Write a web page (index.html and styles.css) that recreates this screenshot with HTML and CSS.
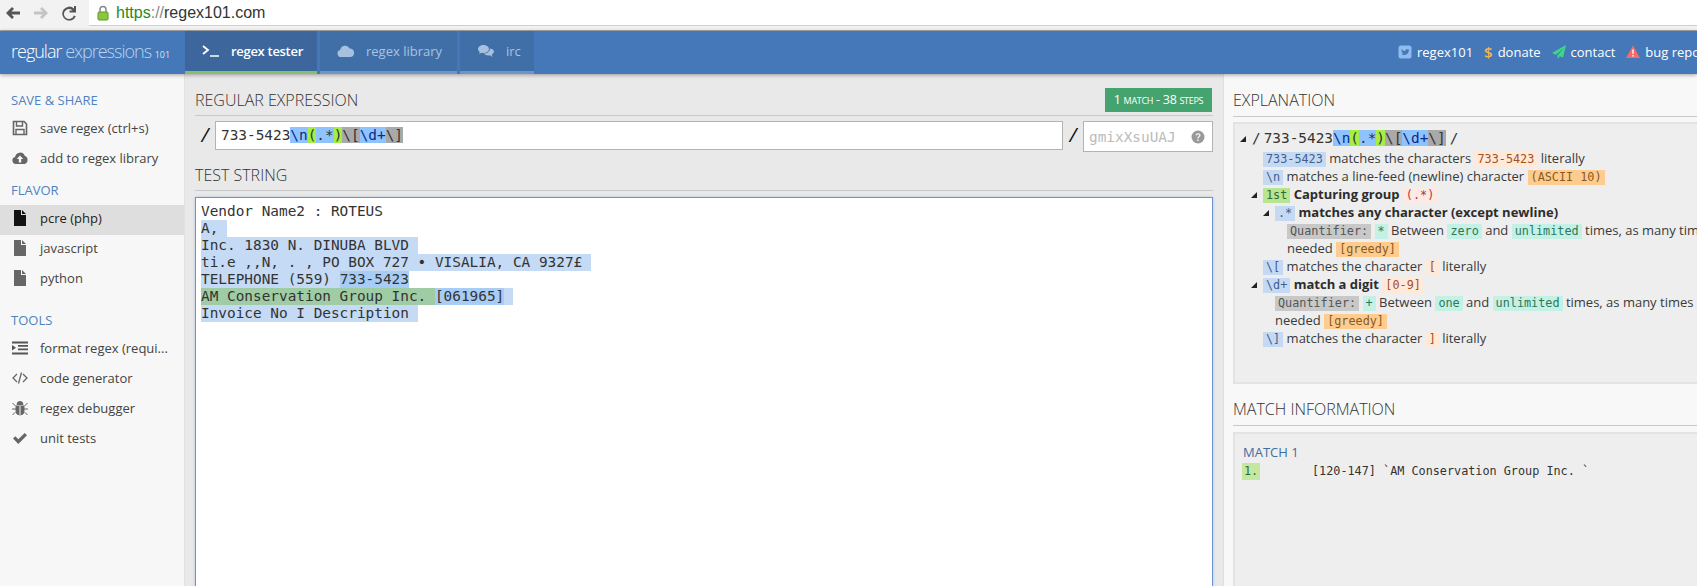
FILE: index.html
```html
<!DOCTYPE html>
<html lang="en">
<head>
<meta charset="utf-8">
<title>regex101</title>
<link rel="stylesheet" href="styles.css">
</head>
<body>
<div class="chrome">
  <div class="nav">
    <svg class="nav-ic" viewBox="0 0 16 16"><path d="M1 8l6-6 2 2-2.600 2.600H15v3H6.400L9 12l-2 2z" fill="#555"/></svg>
    <svg class="nav-ic" viewBox="0 0 16 16"><path d="M15 8L9 2 7 4l2.600 2.600H1v2.800h8.600L7 12l2 2z" fill="#c4c4c4"/></svg>
    <svg class="nav-ic" viewBox="0 0 16 16"><path d="M13 3.400V1l2 0v6.500H8.500v-2h3A5 5 0 1 0 12.800 10.400l2 .8A7 7 0 1 1 13 3.400z" fill="#555"/></svg>
  </div>
  <div class="url">
    <svg class="lock" viewBox="0 0 12 16"><path d="M3 7V4.500a3 3 0 0 1 6 0V7" fill="none" stroke="#888" stroke-width="1.500"/><rect x="1" y="7" width="10" height="8" rx="1" fill="#8cc63f" stroke="#5a9a2a"/></svg>
    <span class="url-text"><span class="https">https</span><span class="sep">://</span>regex101.com</span>
  </div>
</div>
<header class="top">
  <div class="logo">regular <span class="logo-light">expressions</span> <span class="logo-num">101</span></div>
  <nav class="tabs">
    <a class="tab active"><svg class="tab-ic" viewBox="0 0 18 14"><path d="M1 2l5 4-5 4" fill="none" stroke="#fff" stroke-width="1.800"/><path d="M8 12h9" stroke="#fff" stroke-width="1.500"/></svg>regex tester</a>
    <a class="tab lib"><svg class="tab-ic cloud" viewBox="0 0 18 14"><path d="M4 13a3.500 3.500 0 0 1-.8-6.900A5 5 0 0 1 12.600 4.400 4.400 4.400 0 0 1 14 13z" fill="#a6c0e0"/></svg>regex library</a>
    <a class="tab irc"><svg class="tab-ic comment" viewBox="0 0 18 14"><path d="M6.500 1C3.500 1 1 2.800 1 5c0 1.200.7 2.200 1.800 3L2 10l2.500-1.200c.6.200 1.300.2 2 .2 3 0 5.500-1.800 5.500-4S9.500 1 6.500 1z" fill="#a6c0e0"/><path d="M13 4.500c0 2.800-2.800 5-6 5.300C8 11 9.500 11.500 11.500 11.500c.5 0 1 0 1.500-.2L15.500 13l-.6-2.500C16.200 9.700 17 8.600 17 7.500 17 6 15.300 4.800 13 4.500z" fill="#a6c0e0"/></svg>irc</a>
  </nav>
  <div class="links">
    <a class="link"><svg class="link-ic" viewBox="0 0 14 14"><rect x="0.500" y="0.500" width="13" height="13" rx="2.500" fill="#8fbcef"/><path d="M3 4c1.500 1.400 2.800 2 4.200 2.100C7 4.500 9 3.500 10.100 4.600l1-.4-.5 1 .8-.2-.7.8c0 3-3.500 5.400-7.400 3.600 1 0 1.800-.2 2.400-.8-1 0-1.700-.6-1.900-1.300h.9C3.800 7 3.200 6.300 3.200 5.500l.8.2C3.200 5.200 2.900 4.800 3 4z" fill="#4578b8"/></svg>regex101</a>
    <a class="link"><span class="dollar">$</span>donate</a>
    <a class="link"><svg class="link-ic" viewBox="0 0 14 14"><path d="M14 0L0 8l4 1.800L12 3 5.500 10.600V14l2.400-2.800 3.100 1.300z" fill="#3fd68a"/></svg>contact</a>
    <a class="link"><svg class="link-ic" viewBox="0 0 14 14"><path d="M7 0.500L14 13H0z" fill="#f56a6a"/><path d="M6.200 4.500h1.600l-.2 4.500H6.400zM6.300 10h1.400v1.500H6.300z" fill="#fff"/></svg>bug report</a>
  </div>
</header>
<div class="layout">
  <aside class="side">
    <h4 class="side-title">SAVE &amp; SHARE</h4>
    <a class="side-item"><svg class="side-ic" viewBox="0 0 16 16"><path d="M1.500 1.500h10.500l2.500 2.500v10.500h-13z" fill="none" stroke="#666" stroke-width="1.600"/><path d="M4.500 2v4h6V2M4 14V9.500h8V14" fill="none" stroke="#666" stroke-width="1.400"/></svg>save regex (ctrl+s)</a>
    <a class="side-item"><svg class="side-ic" viewBox="0 0 16 16"><path d="M4 14a3.500 3.500 0 0 1-.9-6.900 5 5 0 0 1 9.600-1.400A4.400 4.400 0 0 1 12.500 14z" fill="#666"/><path d="M8 5.500L4.800 9h2v3.500h2.400V9h2z" fill="#f7f7f7"/></svg>add to regex library</a>
    <h4 class="side-title gap-s">FLAVOR</h4>
    <a class="side-item current"><svg class="side-ic" viewBox="0 0 16 16"><path d="M2 0h7v5h5v11H2zM10 0l4 4h-4z" fill="#111"/></svg>pcre (php)</a>
    <a class="side-item"><svg class="side-ic" viewBox="0 0 16 16"><path d="M2 0h7v5h5v11H2zM10 0l4 4h-4z" fill="#666"/></svg>javascript</a>
    <a class="side-item"><svg class="side-ic" viewBox="0 0 16 16"><path d="M2 0h7v5h5v11H2zM10 0l4 4h-4z" fill="#666"/></svg>python</a>
    <h4 class="side-title gap-l">TOOLS</h4>
    <a class="side-item"><svg class="side-ic" viewBox="0 0 16 16"><path d="M0 1.500h16v2H0zM6 5h10v1.800H6zM6 8.500h10v1.800H6zM0 12.500h16v2H0zM0 5l4 2.800-4 2.800z" fill="#555"/></svg>format regex (requi...</a>
    <a class="side-item"><svg class="side-ic" viewBox="0 0 16 16"><path d="M5 4L1 8l4 4M11 4l4 4-4 4M9.500 2.500l-3 11" fill="none" stroke="#666" stroke-width="1.300"/></svg>code generator</a>
    <a class="side-item"><svg class="side-ic" viewBox="0 0 16 16"><path d="M5 4.500a3 3 0 0 1 6 0zM4 6h8v5a4 4 0 0 1-8 0zM0.500 3l3 3M15.500 3l-3 3M0 9h4M12 9h4M0.500 15l3-3M15.500 15l-3-3" fill="#666" stroke="#666"/><path d="M8 6v9" stroke="#f7f7f7" stroke-width="1"/></svg>regex debugger</a>
    <a class="side-item"><svg class="side-ic" viewBox="0 0 16 16"><path d="M1 8.500l2.300-2.300 3 3L12.700 3 15 5.300 6.300 14z" fill="#666"/></svg>unit tests</a>
  </aside>
  <main class="main">
    <div class="head">
      <h3 class="title">REGULAR EXPRESSION</h3>
      <div class="badge">1 <small>MATCH</small> - 38 <small>STEPS</small></div>
    </div>
    <div class="regex-row">
      <span class="slash first">/</span>
      <div class="regex-input mono"><span class="plain">733-5423</span><span class="hb nl">\n</span><span class="hg">(</span><span class="hb">.*</span><span class="hg">)</span><span class="hs">\[</span><span class="hb nl">\d+</span><span class="hs">\]</span></div>
      <span class="slash">/</span>
      <div class="flags mono"><span>gmixXsuUAJ</span><svg class="help" viewBox="0 0 14 14"><circle cx="7" cy="7" r="6.500" fill="#999"/><path d="M4.600 5.200C4.800 3.800 5.800 3.200 7.100 3.200c1.500 0 2.500.9 2.500 2 0 1.900-2 1.800-2 3.300H6.200c0-2.200 1.900-2.200 1.900-3.300 0-.5-.4-.8-1-.8s-1 .3-1.200 1.100zM6.200 9.400h1.500v1.500H6.200z" fill="#eee"/></svg></div>
    </div>
    <div class="head second"><h3 class="title">TEST STRING</h3></div>
    <div class="test mono">
      <div class="line">Vendor Name2 : ROTEUS</div>
      <div class="line"><span class="m">A,&nbsp;</span></div>
      <div class="line"><span class="m">Inc. 1830 N. DINUBA BLVD&nbsp;</span></div>
      <div class="line"><span class="m">ti.e ,,N, . , PO BOX 727 • VISALIA, CA 9327£&nbsp;</span></div>
      <div class="line"><span class="m">TELEPHONE (559) </span><span class="md">733-5423</span></div>
      <div class="line"><span class="mg">AM Conservation Group Inc. </span><span class="md">[061965]</span><span class="m">&nbsp;</span></div>
      <div class="line"><span class="m">Invoice No I Description&nbsp;</span></div>
    </div>
  </main>
  <aside class="right">
    <div class="head r"><h3 class="title">EXPLANATION</h3></div>
    <div class="box expl">
      <div class="row p0"><i class="tri"></i><span class="mono14"><span class="sl">/</span>733-5423<span class="hb nl">\n</span><span class="hg">(</span><span class="hb">.*</span><span class="hg">)</span><span class="hs">\[</span><span class="hb nl">\d+</span><span class="hs">\]</span><span class="sl end">/</span></span></div>
      <div class="row p1"><code class="c blue">733-5423</code> matches the characters <code class="c peach">733-5423</code> literally</div>
      <div class="row p1"><code class="c blue">\n</code> matches a line-feed (newline) character <code class="c orange">(ASCII 10)</code></div>
      <div class="row p1"><i class="tri"></i><code class="c green">1st</code> <b>Capturing group</b> <code class="c pink">(.*)</code></div>
      <div class="row p2"><i class="tri"></i><code class="c blue">.*</code> <b>matches any character (except newline)</b></div>
      <div class="row p3"><code class="c grey">Quantifier:</code> <code class="c teal">*</code> Between <code class="c teal">zero</code> and <code class="c teal">unlimited</code> times, as many times as possible, giving back as<br>needed <code class="c orange">[greedy]</code></div>
      <div class="row p1"><code class="c blue">\[</code> matches the character <code class="c peach">[</code> literally</div>
      <div class="row p1"><i class="tri"></i><code class="c blue">\d+</code> <b>match a digit</b> <code class="c peach">[0-9]</code></div>
      <div class="row p2"><code class="c grey">Quantifier:</code> <code class="c teal">+</code> Between <code class="c teal">one</code> and <code class="c teal">unlimited</code> times, as many times as possible, giving back as<br>needed <code class="c orange">[greedy]</code></div>
      <div class="row p1"><code class="c blue">\]</code> matches the character <code class="c peach">]</code> literally</div>
    </div>
    <div class="head r info"><h3 class="title">MATCH INFORMATION</h3></div>
    <div class="box minfo">
      <div class="match-title">MATCH 1</div>
      <div class="match-row"><code class="idx">1.</code><code class="match-text">[120-147] `AM Conservation Group Inc. `</code></div>
    </div>
  </aside>
</div>
</body>
</html>
```
FILE: styles.css
```css
* { box-sizing: border-box; }
html, body { margin: 0; height: 586px; overflow: hidden; }
body { font-family: "Open Sans", sans-serif; font-size: 14px; color: #333; background: #e9e9e9; width: 1697px; }
.chrome { height: 31px; display: flex; background: #f2f2f2; border-bottom: 1px solid #a9a9a9; }
.nav { width: 89px; display: flex; align-items: flex-start; gap: 12px; padding: 5px 0 0 5px; }
.nav-ic { width: 16px; height: 16px; }
.url { flex: 1; height: 26px; background: #fff; border-bottom: 1px solid #cfcfcf; display: flex; align-items: center; padding-left: 8px; }
.lock { width: 12px; height: 16px; margin-right: 7px; }
.url-text { font-family: "Liberation Sans", sans-serif; font-size: 16px; color: #333; }
.https { color: #1f8a1f; }
.sep { color: #888; }
.top { height: 43px; background: #4578b8; display: flex; position: relative; z-index: 2; box-shadow: 0 1px 4px rgba(0,0,0,.35); }
.logo { width: 185px; padding-left: 11px; color: #fff; font-size: 18px; font-weight: 300; line-height: 41px; letter-spacing: -1px; white-space: nowrap; }
.logo-light { color: #b9d4ef; }
.logo-num { font-size: 9px; letter-spacing: 0; font-weight: 400; color: #d5e3f3; }
.tabs { display: flex; gap: 3px; }
.tab { height: 43px; display: flex; align-items: center; color: #a9c2e0; background: #406fa8; border-bottom: 3px solid #6b96cb; padding: 0 0 0 17px; font-size: 13px; font-weight: 400; }
.tab.active { width: 132px; background: #3c669c; color: #fff; border-bottom-color: #82c06e; padding-left: 17px; font-weight: 600; letter-spacing: -.3px; }
.tab.lib { width: 137px; }
.tab.irc { width: 74px; }
.tab-ic { width: 18px; height: 14px; margin-right: 11px; }
.links { margin-left: auto; display: flex; align-items: center; width: 299px; flex: none; gap: 11px; color: #fff; white-space: nowrap; overflow: hidden; padding-bottom: 1px; }
.link { display: flex; align-items: center; font-size: 13px; }
.link-ic { width: 14px; height: 14px; margin-right: 5px; }
.dollar { color: #f5b942; font-weight: 600; font-size: 15px; margin-right: 5px; }
.layout { display: flex; height: 512px; }
.side { width: 185px; flex: none; background: #f7f7f7; padding-top: 16px; border-right: 1px solid #e2e2e2; }
.side-title { margin: 0 0 5px; padding-left: 11px; height: 20px; line-height: 20px; color: #4f82c0; font-size: 13px; font-weight: 400; }
.gap-s { margin-top: 5px; }
.gap-l { margin-top: 15px; }
.side-item { display: flex; align-items: center; height: 30px; padding: 0 0 4px 12px; font-size: 13px; color: #444; white-space: nowrap; }
.side-item.current { background: #dedede; color: #222; }
.side-ic { width: 16px; height: 16px; margin-right: 12px; flex: none; }
.main { width: 1038px; flex: none; padding: 14px 10px 0; overflow: hidden; background: #e9e9e9; }
.head { display: flex; justify-content: space-between; align-items: center; height: 28px; border-bottom: 1px solid #c9c9c9; }
.head.second { margin-top: 12px; height: 27px; }
.title { margin: 0; padding-bottom: 4px; font-size: 16px; font-weight: 300; color: #333; white-space: nowrap; }
.badge { width: 107px; height: 24px; background: #45a36f; color: #fff; text-align: center; font-size: 12.500px; line-height: 24px; margin: 0 1px 3px 0; letter-spacing: -.3px; white-space: nowrap; }
.badge small { font-size: 9px; }
.regex-row { display: flex; align-items: flex-start; margin-top: 5px; }
.slash { width: 20px; height: 29px; line-height: 27px; text-align: center; font-size: 20px; color: #111; font-weight: 400; font-style: italic; flex: none; }
.mono, .mono14 { font-family: "DejaVu Sans Mono", monospace; font-size: 14.400px; }
.regex-input { width: 848px; height: 29px; background: #fff; border: 1px solid #b3b3b3; padding: 5px 5px; line-height: 17px; white-space: pre; color: #333; }
.flags { width: 130px; height: 31px; background: #fff; border: 1px solid #b3b3b3; display: flex; align-items: center; justify-content: space-between; padding: 0 7px 0 5px; color: #bbb; }
.help { width: 14px; height: 14px; }
.hb { background: #8fc3ff; }
.nl { color: #0a2a88; }
.hg { background: #a4ee45; }
.hs { background: #a9a9a9; }
.test { margin-top: 6px; height: 400px; background: #fff; border: 1px solid #6a95d0; padding: 5px; color: #333; box-shadow: 0 0 3px rgba(106,149,208,.4); }
.line { height: 17px; line-height: 17px; white-space: pre; }
.line span { display: inline-block; height: 17px; }
.m { background: #c5daf5; }
.md { background: #a7cdf6; }
.mg { background: #a0cca5; }
.right { flex: 1; min-width: 0; background: #f8f8f8; padding: 14px 0 0 9px; overflow: hidden; border-left: 1px solid #dfdfdf; }
.head.r { width: 500px; height: 29px; }
.box { width: 520px; background: #eee; border: 2px solid #e3e3e3; }
.expl { margin-top: 5px; height: 262px; padding-top: 4px; }
.info { margin-top: 13px; }
.minfo { margin-top: 6px; height: 200px; padding: 9px 0 0 8px; }
.row { line-height: 18px; min-height: 18px; white-space: nowrap; font-size: 13px; color: #3a3a3a; }
.row b { font-weight: 700; color: #2c2c2c; }
.row.p0 { height: 21px; line-height: 20px; }
.p0 { padding-left: 17px; }
.p1 { padding-left: 28px; }
.p2 { padding-left: 40px; }
.p3 { padding-left: 52px; }
.tri { display: inline-block; width: 0; height: 0; border-left: 6px solid transparent; border-bottom: 6px solid #222; margin: 0 6px 1px -12px; vertical-align: middle; }
.mono14 { color: #333; }
.sl { margin-right: 3px; }
.sl.end { margin: 0 0 0 4px; }
.c { display: inline-block; height: 15px; line-height: 15px; padding: 0 3px; font-family: "DejaVu Sans Mono", monospace; font-size: 11.800px; vertical-align: 0; }
.blue { background: #c5daf2; color: #3f5f8f; }
.peach { background: #ffe9d9; color: #a5501f; }
.orange { background: #ffcc8f; color: #8a5a20; }
.green { background: #b9e58f; color: #2f6a3a; }
.pink { background: #ffe9e5; color: #a04040; }
.grey { background: #c8c8c8; color: #555; }
.teal { background: #c4f0e5; color: #2a7a5a; }
.match-title { color: #3f6f9f; font-size: 13px; line-height: 18px; }
.match-row { display: flex; margin-top: 2px; }
.idx { width: 18px; height: 17px; line-height: 17px; margin-left: -1px; background: #c5e8a0; font-family: "DejaVu Sans Mono", monospace; font-size: 11.800px; padding-left: 2px; color: #2f6a3a; }
.match-text { margin-left: 52px; font-family: "DejaVu Sans Mono", monospace; font-size: 11.800px; line-height: 17px; white-space: pre; color: #333; }
```
